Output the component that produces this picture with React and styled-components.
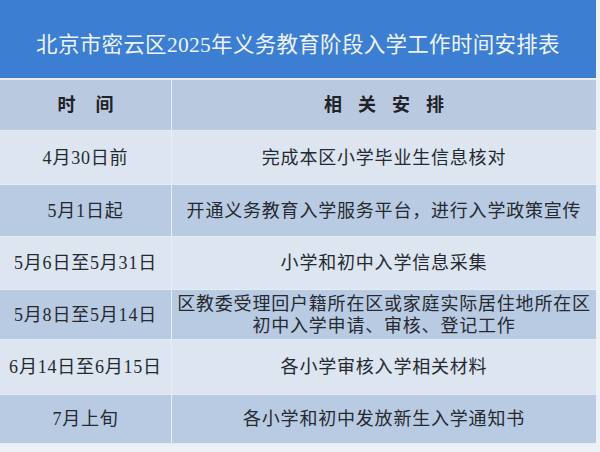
import React from 'react';
import styled, { createGlobalStyle } from 'styled-components';

const GlobalStyle = createGlobalStyle`
  html, body {
    margin: 0;
    padding: 0;
    background: #eef2f7;
  }
  body {
    font-family: "Liberation Serif", "Noto Sans CJK SC", serif;
  }
`;

const Sheet = styled.div`
  width: 596px;
  height: 447px;
  display: flex;
  flex-direction: column;
  background: #e9eff6;
`;

const Title = styled.div`
  height: 80px;
  background: #3b7ed2;
  color: #eef3fb;
  font-size: 21.5px;
  letter-spacing: 0.3px;
  display: flex;
  align-items: center;
  justify-content: center;
  padding-top: 6px;
  box-sizing: border-box;
  border-bottom: 2px solid #e6edf6;
`;

const Row = styled.div`
  display: grid;
  grid-template-columns: 171px 1fr;
  height: ${({ h }) => h}px;
  background: ${({ tone }) =>
    tone === 'head' ? '#b9c9df' : tone === 'dark' ? '#b9cbe3' : '#dce5f0'};
  border-bottom: 1px solid #e4ebf4;
  box-sizing: border-box;
`;

const Cell = styled.div`
  display: flex;
  align-items: center;
  justify-content: center;
  text-align: center;
  color: #262a30;
  font-size: 18px;
  line-height: 22px;
  letter-spacing: 0.8px;
  & + & {
    border-left: 1px solid #e8eef6;
  }
`;

const HeadCell = styled(Cell)`
  font-weight: bold;
  font-size: 18px;
  color: #1f2226;
  letter-spacing: ${({ spread }) => spread}px;
  padding-left: ${({ spread }) => spread}px;
`;

const rows = [
  { time: '4月30日前', text: '完成本区小学毕业生信息核对', h: 54 },
  { time: '5月1日起', text: '开通义务教育入学服务平台，进行入学政策宣传', h: 52 },
  { time: '5月6日至5月31日', text: '小学和初中入学信息采集', h: 53 },
  {
    time: '5月8日至5月14日',
    text: ['区教委受理回户籍所在区或家庭实际居住地所在区', '初中入学申请、审核、登记工作'],
    h: 50,
  },
  { time: '6月14日至6月15日', text: '各小学审核入学相关材料', h: 55 },
  { time: '7月上旬', text: '各小学和初中发放新生入学通知书', h: 49 },
];

export default function App() {
  return (
    <>
      <GlobalStyle />
      <Sheet>
        <Title>北京市密云区2025年义务教育阶段入学工作时间安排表</Title>
        <Row tone="head" h={51}>
          <HeadCell spread={20}>时间</HeadCell>
          <HeadCell spread={16}>相关安排</HeadCell>
        </Row>
        {rows.map((row, i) => (
          <Row key={`row-${i}`} tone={i % 2 ? 'dark' : 'light'} h={row.h}>
            <Cell>{row.time}</Cell>
            <Cell>
              {Array.isArray(row.text) ? (
                <span>
                  {row.text[0]}
                  <br />
                  {row.text[1]}
                </span>
              ) : (
                row.text
              )}
            </Cell>
          </Row>
        ))}
      </Sheet>
    </>
  );
}
